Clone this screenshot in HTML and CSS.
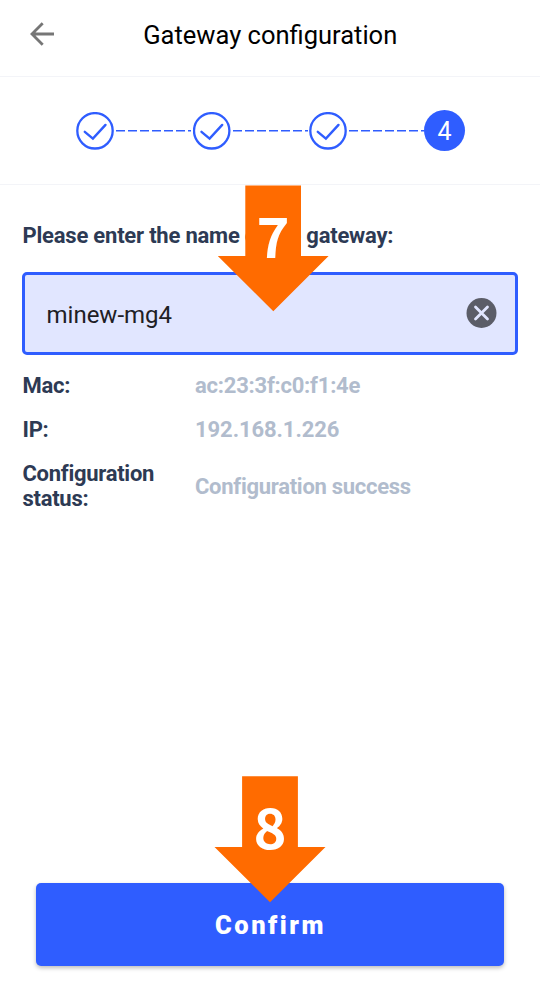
FILE: index.html
```html
<!DOCTYPE html>
<html lang="en">
<head>
<meta charset="utf-8">
<title>Gateway configuration</title>
<link rel="stylesheet" href="styles.css">
</head>
<body>
<header class="topbar">
  <svg class="back" width="26" height="26" viewBox="0 0 26 26"><path d="M13.7 2.3 3 13l10.7 10.7M3 13h22"/></svg>
  <h1 class="title">Gateway configuration</h1>
</header>
<nav class="steps">
  <svg class="done" width="38" height="38" viewBox="0 0 38 38"><circle cx="19" cy="18.8" r="17.7"/><path d="m8.8 19.8 8.1 6.8L29.5 12.9"/></svg>
  <svg class="dash" width="75" height="2" viewBox="0 0 75 2"><path d="M0 .6h75"/></svg>
  <svg class="done" width="38" height="38" viewBox="0 0 38 38"><circle cx="18.7" cy="18.8" r="17.7"/><path d="m8.5 19.8 8.1 6.8L29.2 12.9"/></svg>
  <svg class="dash" width="75" height="2" viewBox="0 0 75 2"><path d="M0 .6h75"/></svg>
  <svg class="done" width="38" height="38" viewBox="0 0 38 38"><circle cx="19" cy="18.8" r="17.7"/><path d="m8.8 19.8 8.1 6.8L29.5 12.9"/></svg>
  <svg class="dash" width="75" height="2" viewBox="0 0 75 2"><path d="M0 .6h75"/></svg>
  <span class="current">4</span>
</nav>
<main class="content">
  <div class="prompt">Please enter the name of the gateway:</div>
  <div class="field">
    <span class="value">minew-mg4</span>
    <svg width="31" height="31" viewBox="0 0 31 31"><circle cx="15.5" cy="15" r="15" fill="#5b5d68"/><path class="cross" d="m9.5 9 12 12m0-12-12 12"/></svg>
  </div>
  <dl class="info">
    <dt>Mac:</dt><dd class="mac">ac:23:3f:c0:f1:4e</dd>
    <dt>IP:</dt><dd class="ip">192.168.1.226</dd>
    <dt>Configuration status:</dt><dd>Configuration success</dd>
  </dl>
</main>
<footer class="footer"><button class="confirm">Confirm</button></footer>
<div class="marker marker-name">
  <svg width="112" height="127" viewBox="0 0 112 127"><path d="M28.3.4H84V71h27.6L56.3 126.3.8 71h27.5z"/></svg>
  <span>7</span>
</div>
<div class="marker marker-confirm">
  <svg width="112" height="127" viewBox="0 0 112 127"><path d="M28.1.3h55.8V71h27.6L56 126.3.5 71h27.6z"/></svg>
  <span>8</span>
</div>
</body>
</html>
```
FILE: styles.css
```css
* { box-sizing: border-box; }
body {
  margin: 0;
  height: 999px;
  position: relative;
  display: flex;
  flex-direction: column;
  overflow: hidden;
  background: #fff;
  font-family: Roboto, "Liberation Sans", sans-serif;
}
.topbar {
  height: 77px;
  display: flex;
  align-items: center;
  padding: 0 29px 8px;
  border-bottom: 1px solid #f3f4f8;
}
.back { fill: none; stroke: #767676; stroke-width: 2.8; }
.title {
  flex: 1;
  margin: 2px 25.5px 0 0;
  text-align: center;
  font-size: 25.5px;
  font-weight: 400;
  color: #000;
}
.steps {
  height: 108px;
  display: flex;
  align-items: center;
  padding-left: 76px;
  border-bottom: 1px solid #f3f4f8;
}
.done { fill: none; stroke: #2f5dff; stroke-width: 2.3; flex: none; }
.done path { stroke-linecap: round; stroke-width: 2.4; }
.dash { margin: 0 1.25px 0 2.25px; flex: none; stroke: #2f5dff; stroke-width: 1.6; stroke-dasharray: 9 3; }
.current {
  width: 41px;
  height: 41px;
  margin-left: -1.5px;
  border-radius: 50%;
  background: #2f5dff;
  color: #fff;
  font-size: 25px;
  line-height: 43px;
  text-align: center;
}
.content { flex: 1; padding: 37px 22px 0; }
.prompt {
  height: 50px;
  padding-left: .5px;
  font-size: 22px;
  line-height: 28px;
  font-weight: 700;
  letter-spacing: -.21px;
  color: #2d3a54;
  white-space: nowrap;
}
.field {
  height: 83px;
  width: 495.5px;
  display: flex;
  align-items: center;
  justify-content: space-between;
  padding: 0 18px 0 21.5px;
  border: 3px solid #2f5dff;
  border-radius: 5px;
  background: #e1e6ff;
}
.value { padding-top: 2px; font-size: 24px; color: #1e2025; }
.cross { fill: none; stroke: #e1e6ff; stroke-width: 2.8; stroke-linecap: round; }
.info {
  margin: 18px 0 0 .5px;
  display: grid;
  grid-template-columns: 172.5px 1fr;
  row-gap: 19px;
  align-items: center;
  font-size: 22px;
  line-height: 25px;
  font-weight: 700;
  letter-spacing: -.28px;
}
.info dt { color: #2d3a54; width: 150px; }
.info dd { margin: 0; color: #b1bccd; }
.info .mac { letter-spacing: -.23px; }
.info .ip { letter-spacing: -.08px; }
.footer { padding: 0 36px 33px; }
.confirm {
  display: block;
  width: 100%;
  height: 83.5px;
  padding: 1px 0 0 1px;
  border: 0;
  border-radius: 5px;
  background: #2f5dff;
  color: #fff;
  font: 900 25.5px Roboto, sans-serif;
  letter-spacing: 2.5px;
  box-shadow: 0 2px 4px #0004;
}
.marker { position: absolute; width: 112px; height: 127px; }
.marker svg { display: block; fill: #ff6b00; }
.marker span {
  position: absolute;
  inset: 8px 0 auto;
  text-align: center;
  font: 700 56px/82px "Noto Sans CJK SC", sans-serif;
  color: #fff;
}
.marker-name { left: 217px; top: 185px; }
.marker-confirm { left: 214px; top: 776px; }
```
